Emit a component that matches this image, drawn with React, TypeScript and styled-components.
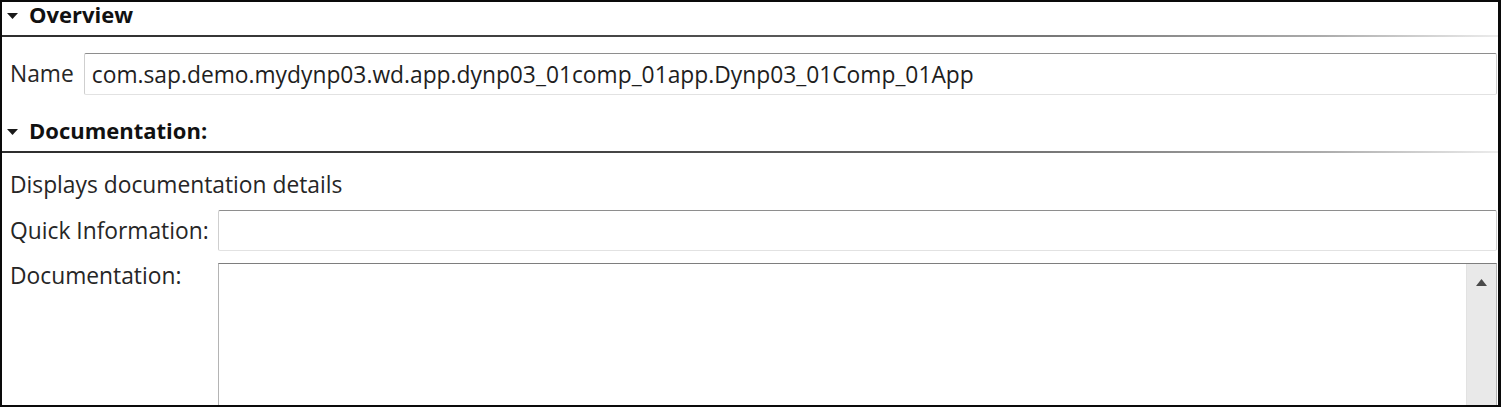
import React from "react";
import styled, { createGlobalStyle } from "styled-components";

const Global = createGlobalStyle`
  html, body { margin: 0; padding: 0; background: #fff; }
  body { font-family: "Open Sans", "Noto Sans", sans-serif; }
`;

const Frame = styled.div`
  box-sizing: border-box;
  width: 1501px;
  height: 407px;
  border: 2px solid #0a0a0a;
  border-right-width: 3px;
  overflow: hidden;
  display: flex;
  flex-direction: column;
  background: #fff;
  color: #262626;
  font-family: "Open Sans", "Noto Sans", sans-serif;
  font-size: 22.8px;
`;

const Header = styled.div`
  display: flex;
  align-items: flex-start;
  gap: 11px;
  height: 33px;
  padding-left: 5px;
  flex-shrink: 0;
  font-size: 22px;
  line-height: 24px;
  font-weight: 700;
  color: #111;
`;

const Caret = styled.svg`
  width: 11px;
  height: 6px;
  margin-top: 11px;
  flex-shrink: 0;
`;

const Rule = styled.div`
  height: 2px;
  flex-shrink: 0;
  background: linear-gradient(to right, #2e2e2e 0%, #444 40%, #777 70%, #aaa 88%, #ececec 100%);
`;

const NameRow = styled.div`
  display: flex;
  align-items: center;
  gap: 10px;
  margin: 16px 1px 23px 8px;
  flex-shrink: 0;
`;

const Label = styled.span<{ $top?: boolean }>`
  line-height: 26px;
  white-space: nowrap;
  align-self: ${(p) => (p.$top ? "start" : "center")};
`;

const TextBox = styled.div<{ $h: number }>`
  flex: 1;
  box-sizing: border-box;
  height: ${(p) => p.$h}px;
  border: 1px solid #cfcfcf;
  border-top-color: #8e8e8e;
  border-bottom-color: #e2e2e2;
  border-radius: 2px;
  padding-left: 7px;
  display: flex;
  align-items: center;
  color: #1e1e1e;
  white-space: nowrap;
`;

const Body = styled.div`
  display: flex;
  flex-direction: column;
  padding: 19px 1px 0 8px;
`;

const Description = styled.div`
  line-height: 26px;
  margin-bottom: 12px;
`;

const FieldGrid = styled.div`
  display: grid;
  grid-template-columns: auto 1fr;
  column-gap: 9px;
  row-gap: 12px;
  align-items: center;
`;

const Area = styled.div`
  box-sizing: border-box;
  height: 180px;
  border: 1px solid #b4b4b4;
  border-top-color: #7e7e7e;
  display: flex;
  justify-content: flex-end;
`;

const ScrollTrack = styled.div`
  width: 30px;
  background: #e9e9e9;
  border-left: 1px solid #e2e2e2;
  display: flex;
  justify-content: center;
  padding-top: 15px;
  box-sizing: border-box;
`;

const Arrow = styled.svg`
  width: 11px;
  height: 7px;
`;

const DownCaret = () => (
  <Caret viewBox="0 0 11 6">
    <polygon points="0,0 11,0 5.5,6" fill="#1a1a1a" />
  </Caret>
);

export default function App() {
  return (
    <>
      <Global />
      <Frame>
        <Header>
          <DownCaret />
          <span>Overview</span>
        </Header>
        <Rule />
        <NameRow>
          <Label>Name</Label>
          <TextBox $h={42}>com.sap.demo.mydynp03.wd.app.dynp03_01comp_01app.Dynp03_01Comp_01App</TextBox>
        </NameRow>
        <Header>
          <DownCaret />
          <span>Documentation:</span>
        </Header>
        <Rule />
        <Body>
          <Description>Displays documentation details</Description>
          <FieldGrid>
            <Label>Quick Information:</Label>
            <TextBox $h={41} />
            <Label $top>Documentation:</Label>
            <Area>
              <ScrollTrack>
                <Arrow viewBox="0 0 11 7">
                  <polygon points="5.5,0 11,7 0,7" fill="#4a4a4a" />
                </Arrow>
              </ScrollTrack>
            </Area>
          </FieldGrid>
        </Body>
      </Frame>
    </>
  );
}
